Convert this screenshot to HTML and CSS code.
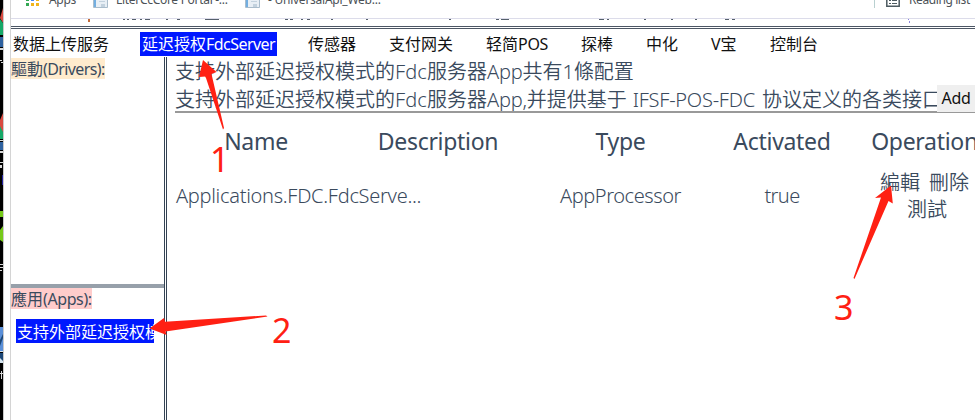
FILE: index.html
```html
<!DOCTYPE html>
<html lang="zh">
<head>
<meta charset="utf-8">
<title>Fdc Server</title>
<link rel="stylesheet" href="styles.css">
</head>
<body>
<div class="desktop">
  <svg width="3" height="420" viewBox="0 0 3 420">
    <path fill="#d94a40" d="M3 8L0 18l3 5zM3 113L0 120v8l3 5z"/>
    <path fill="#16a868" d="M0 19l3 4v12H0zM0 126l3 6v7H0z"/>
    <path fill="#2f62a0" d="M0 37h3v10H0zM0 142h3v8H0z"/>
    <path fill="#d8d8d8" d="M0 48h3v2H0zM0 60h2v1H0zM1 62h2v1H1zM0 140h3v1H0zM0 151h3v2H0zM0 162h3v1H0zM0 165h2v3H0zM0 264h3v1H0zM0 267h3v1H0zM0 270h2v1H0zM0 373h3v1H0zM1 371h1v8H1z"/>
    <path fill="#2320a0" d="M2 175h1v10H2z"/>
    <path fill="#76c91a" d="M0 211h3v6H0zM3 226L0 230v10l3 2z"/>
    <path fill="#5a8fd8" d="M0 327h3v25H0z"/>
    <path fill="#1c4777" d="M0 340l3-6v4l-3 8zM0 353h3v9H0z"/>
    <path fill="#d5e4ee" d="M0 351h3v1H0zM0 358l3 3v2H0z"/>
  </svg>
</div>
<div class="frame"></div>
<div class="page">
  <div class="bookmarks">
    <svg class="apps-icon" width="14" height="6" viewBox="0 0 14 6">
      <path fill="#34a853" d="M0 0h3v1H0zM0 3h3v3H0z"/><path fill="#4285f4" d="M5 0h3v1H5z"/><path fill="#f0b41c" d="M10 0h3v1h-3zM5 3h3v3H5zM10 3h3v3h-3z"/>
    </svg>
    <span class="bm bm-apps">Apps</span>
    <svg class="doc" width="15" height="8" viewBox="0 0 15 8"><path fill="#e8eff5" stroke="#a9bccb" d="M.5-1h14v8.500H.5z"/><path fill="#72aee0" d="M1 0h2v7H1z"/><path fill="#c3d2de" d="M6 1h6v1H6zM8 4h4v3H8z"/></svg>
    <span class="bm bm-portal">LiterCcCore Portal -...</span>
    <svg class="doc" width="15" height="8" viewBox="0 0 15 8"><path fill="#e8eff5" stroke="#a9bccb" d="M.5-1h14v8.500H.5z"/><path fill="#72aee0" d="M1 0h2v7H1z"/><path fill="#c3d2de" d="M6 1h6v1H6zM8 4h4v3H8z"/></svg>
    <span class="bm bm-api">- UniversalApi_Web...</span>
    <span class="bar"></span>
    <svg class="list-icon" width="14" height="7" viewBox="0 0 14 7"><path fill="none" stroke="#4d5a60" stroke-width="1.500" d="M.8-1v7.200h12.400V-1"/><path fill="#4d5a60" d="M3 0h2v1H3zM6 0h5v1H6zM3 3h2v1H3zM6 3h5v1H6z"/></svg>
    <span class="bm bm-read">Reading list</span>
  </div>
  <div class="clipped">
    <svg width="964" height="6" viewBox="0 0 964 6">
      <path fill="#56606c" d="M112 0h2v1h-2zM116 0h2v1h-2zM121 0h4v1h-4zM129 0h2v1h-2zM134 0h5v1h-5zM155 0h2v1h-2zM166 0h3v1h-3zM194 0h14v1h-14zM274 0h3v1h-3zM279 0h3v1h-3zM290 0h2v1h-2zM296 0h3v1h-3zM320 0h2v1h-2zM355 0h2v1h-2zM438 0h2v1h-2zM485 0h3v1h-3zM490 0h8v1h-8zM588 0h5v1h-5zM596 0h2v1h-2zM633 0h2v1h-2zM660 0h2v1h-2zM684 0h2v1h-2zM714 0h4v1h-4zM721 0h3v1h-3z"/>
      <path fill="#c26a38" d="M77 0h2v3h-2z"/><path fill="#8c85dc" d="M897 0h1v1h-1zM898 2h1v2h-1z"/>
    </svg>
  </div>
  <nav class="tabs">
    <span class="t96">数据上传服务</span>
    <span class="t133 active">延迟授权<i class="fdc">FdcServer</i></span>
    <span class="t48">传感器</span>
    <span class="t64">支付网关</span>
    <span class="t62">轻简<i class="pos">POS</i></span>
    <span class="t32">探棒</span>
    <span class="t32">中化</span>
    <span class="t26">V宝</span>
    <span class="t48">控制台</span>
  </nav>
  <div class="body">
    <aside class="side">
      <section class="drivers"><span class="label cream">驅動<i class="drv">(Drivers):</i></span></section>
      <section class="apps">
        <span class="label pink">應用<i class="app">(Apps):</i></span>
        <div class="selected">支持外部延迟授权模式</div>
      </section>
    </aside>
    <main class="main">
      <div class="line">支持外部延迟授权模式的<i class="h-fdc">Fdc</i>服务器<i class="h-app">App</i>共有<i class="h-one">1</i>條配置</div>
      <div class="line second"><span class="desc">支持外部延迟授权模式的<i class="h-fdc">Fdc</i>服务器<i class="h-app2">App,</i>并提供基于<i class="h-ifsf">IFSF-POS-FDC</i>协议定义的各类接口</span><button class="add">Add</button></div>
      <div class="grid head">
        <span class="c-name">Name</span><span class="c-desc">Description</span><span class="c-type">Type</span><span class="c-act">Activated</span><span class="c-op">Operation</span>
      </div>
      <div class="grid row">
        <span class="r-name">Applications.FDC.FdcServe...</span><span></span><span class="r-type">AppProcessor</span><span class="r-true">true</span>
        <span class="ops"><span class="pair"><b>編輯</b><b>刪除</b></span><b class="test">測試</b></span>
      </div>
    </main>
  </div>
</div>
<svg class="notes" width="975" height="420" viewBox="0 0 975 420">
  <path d="M203 60L199 77L205.500 76.500L223 129.500L224 128L211.500 74L216.500 72ZM149.500 328.500L164 318L165 321.700L266 315.500L267.500 316.500L165.500 331.500L166.700 335ZM891 185.500L875 198L881 197.500L853.500 278L854.500 279L888.500 201L892.800 203.500Z"/>
  <text x="210" y="172">1</text><text x="272" y="343">2</text><text x="834" y="320">3</text>
</svg>
</body>
</html>
```
FILE: styles.css
```css
* { box-sizing: border-box; }
body {
  margin: 0; width: 975px; height: 420px; overflow: hidden; display: flex; position: relative;
  background: #fff; color: #3a4a5d;
  font-family: "Noto Sans", "Noto Sans CJK SC", sans-serif;
}
i, b { font-style: normal; font-weight: inherit; }
i { display: inline-block; white-space: pre; }
.desktop { width: 3px; background: #000; flex: none; }
.desktop svg { display: block; }
.frame { width: 8px; flex: none; border-left: 1px solid #c9c9c9; border-right: 1px solid #d4d4d4; }
.page { width: 964px; flex: none; display: flex; flex-direction: column; }

.bookmarks { height: 19px; border-bottom: 1px solid #dcdcea; display: flex; align-items: flex-start; overflow: hidden; padding-left: 15px; }
.bookmarks > * { flex: none; }
.bm { font-size: 12px; line-height: 16px; margin-top: -8px; color: #4b5156; white-space: nowrap; }
.bm-apps { width: 27px; margin-left: 9px; letter-spacing: -.3px; }
.doc { margin-left: 17px; }
.bm-portal { width: 112px; margin-left: 8px; letter-spacing: -.3px; }
.bm-api { width: 112px; margin-left: 8px; letter-spacing: -.25px; }
.bar { width: 1px; height: 8px; background: #b9d0d0; margin-left: 494px; }
.list-icon { margin-left: 11px; }
.bm-read { margin-left: 9px; letter-spacing: -.4px; }

.clipped { height: 7px; }
.clipped svg { display: block; }
.tabs { height: 31px; border-top: 3px double #4c5664; display: flex; align-items: center; gap: 33px; padding: 2px 0 0 2px; flex: none; color: #111; font-size: 16px; line-height: 24px; white-space: nowrap; }
.t96 { width: 96px; } .t133 { width: 133px; } .t64 { width: 64px; } .t62 { width: 62px; }
.t48 { width: 48px; } .t32 { width: 32px; } .t26 { width: 26px; }
.active { background: #0018ff; color: #fff; box-shadow: -2px 0 #0018ff, 2px 0 #0018ff; }
.fdc { letter-spacing: -.55px; }
.pos { letter-spacing: -.3px; }

.body { display: flex; height: 363px; flex: none; }
.side { width: 156px; border-right: 3px double #344354; flex: none; display: flex; flex-direction: column; }
.drivers { height: 231px; border-bottom: 4px solid #97a0aa; }
.label { display: block; height: 21px; line-height: 22px; font-size: 16px; white-space: nowrap; }
.cream { width: 94px; margin-top: 1px; background: #ffebcd; }
.drv { letter-spacing: -.6px; }
.app { letter-spacing: -.4px; }
.pink { width: 81px; background: #ffcccb; }
.selected { width: 138px; height: 24px; margin: 10px 0 0 5px; padding-left: 1px; background: #0018ff; color: #fff; font-size: 16px; line-height: 26px; overflow: hidden; white-space: nowrap; }

.main { width: 808px; padding-left: 8px; flex: none; font-weight: 350; }
.line { height: 28px; font-size: 20px; line-height: 28px; white-space: nowrap; }
.line:first-child { margin-top: 1px; }
.second { height: 27px; display: flex; border-bottom: 2px solid #999; }
.desc { width: 762px; overflow: hidden; line-height: 28px; }
.add { width: 38px; height: 27px; margin: -1px 0 0; border: 0; padding: 0; background: #efefef; color: #111; font: 16px/27px "Noto Sans", sans-serif; flex: none; letter-spacing: -.3px; }
.h-fdc { letter-spacing: .1px; }
.h-app, .h-app2 { letter-spacing: -.2px; }
.h-ifsf { margin: 0 7px 0 6px; letter-spacing: -.25px; }
.grid { display: grid; grid-template-columns: 162px 202px 163px 160px 122px; text-align: center; white-space: nowrap; align-items: center; }
.head { height: 54px; font-size: 23px; font-weight: 400; padding-top: 1px; letter-spacing: -.3px; }
.row { height: 56px; font-size: 20px; padding-top: 1px; }
.c-op { padding-left: 3px; }
.r-name { text-align: left; padding-left: 1px; letter-spacing: -.29px; }
.r-type { letter-spacing: -.42px; }
.r-true { letter-spacing: -.6px; }
.ops { display: flex; flex-direction: column; align-items: center; line-height: 27px; padding-left: 3px; }
.pair { display: flex; gap: 9px; }
.test { padding-left: 5px; }
.notes { position: absolute; left: 0; top: 0; fill: #ff2013; }
.notes text { font: 34px "Noto Sans", sans-serif; }
```
